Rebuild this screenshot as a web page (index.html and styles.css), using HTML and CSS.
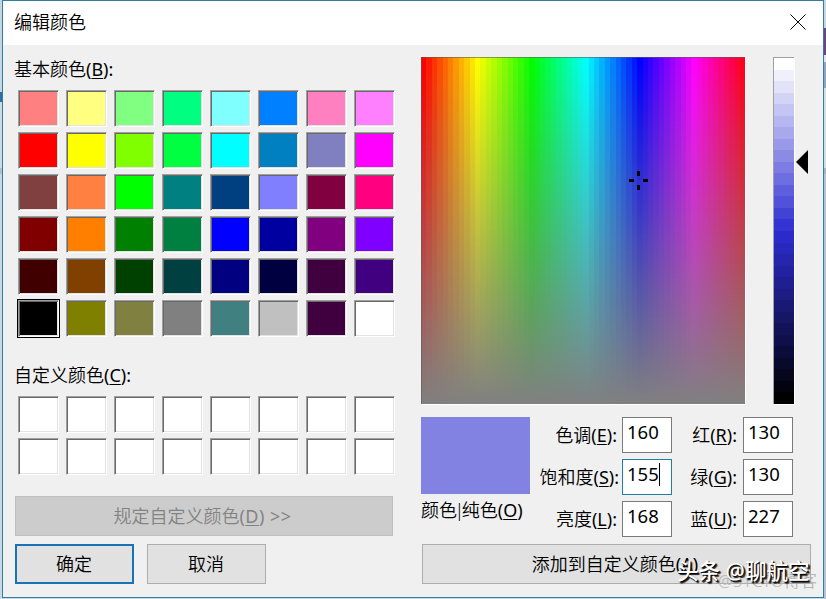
FILE: index.html
```
<!DOCTYPE html>
<html lang="zh-CN">
<head>
    <meta charset="UTF-8">
    <meta name="viewport" content="width=device-width, initial-scale=1.0">
    <title>编辑颜色</title>
    <link rel="stylesheet" href="styles.css">
</head>
<body>

    <div class="dialog">
        <div class="titlebar">
            <span class="title">编辑颜色</span>
            <svg class="close" width="16" height="16" viewBox="0 0 16 16"><path d="M0.5 0.5 L15.5 15.5 M15.5 0.5 L0.5 15.5" stroke="#000" stroke-width="1" fill="none"/></svg>
        </div>

        <div class="content">
            <div class="left">
                <div class="label basic-label">基本颜色<span class="key">(<u>B</u>):</span></div>
                <div class="swatches" id="basic"></div>
                <div class="label custom-label">自定义颜色<span class="key">(<u>C</u>):</span></div>
                <div class="swatches" id="custom"></div>
                <div class="btn disabled">规定自定义颜色<span class="key">(<u>D</u>) &gt;&gt;</span></div>
                <div class="btn-row">
                    <div class="btn primary">确定</div>
                    <div class="btn">取消</div>
                </div>
            </div>

            <div class="right">
                <div class="pickers">
                    <div class="spectrum" id="spectrum">
                        <svg class="cross" width="20" height="20" viewBox="0 0 20 20"><path d="M8 0h3v5H8z M8 14h3v5H8z M0 8h5v3H0z M14 8h5v3h-5z"/></svg>
                    </div>
                    <div class="lum" id="lum"></div>
                    <svg class="arrow" width="12" height="24" viewBox="0 0 12 24"><path d="M0 12 L12 0 V24 Z"/></svg>
                </div>

                <div class="values">
                    <div class="preview-box">
                        <div class="preview"></div>
                        <div class="label">颜色<span class="bar">|</span>纯色<span class="key">(<u>O</u>)</span></div>
                    </div>
                    <div class="fields hsl">
                        <span class="label shift">色调<span class="key">(<u>E</u>):</span></span><div class="field">160</div>
                        <span class="label">饱和度<span class="key">(<u>S</u>):</span></span><div class="field focus">155<i class="caret"></i></div>
                        <span class="label shift">亮度<span class="key">(<u>L</u>):</span></span><div class="field">168</div>
                    </div>
                    <div class="fields rgb">
                        <span class="label">红<span class="key">(<u>R</u>):</span></span><div class="field">130</div>
                        <span class="label">绿<span class="key">(<u>G</u>):</span></span><div class="field">130</div>
                        <span class="label">蓝<span class="key">(<u>U</u>):</span></span><div class="field">227</div>
                    </div>
                </div>

                <div class="btn add">添加到自定义颜色<span class="key">(<u>A</u>)</span></div>
            </div>
        </div>
    </div>

    <div class="mark-small">@51CTO博客</div>
    <div class="mark">头条 @聊航空</div>

    <script>
        const colores = [
            '#ff8080', '#ffff80', '#80ff80', '#00ff80', '#80ffff', '#0080ff', '#ff80c0', '#ff80ff',
            '#ff0000', '#ffff00', '#80ff00', '#00ff40', '#00ffff', '#0080c0', '#8080c0', '#ff00ff',
            '#804040', '#ff8040', '#00ff00', '#008080', '#004080', '#8080ff', '#800040', '#ff0080',
            '#800000', '#ff8000', '#008000', '#008040', '#0000ff', '#0000a0', '#800080', '#8000ff',
            '#400000', '#804000', '#004000', '#004040', '#000080', '#000040', '#400040', '#400080',
            '#000000', '#808000', '#808040', '#808080', '#408080', '#c0c0c0', '#400040', '#ffffff'
        ];

        function add(parent, cls, color) {
            const el = document.createElement('div');
            el.className = cls;
            el.style.backgroundColor = color;
            document.getElementById(parent).appendChild(el);
        }

        colores.forEach((c, i) => add('basic', i === 40 ? 'swatch selected' : 'swatch', c));
        for (let i = 0; i < 16; i++) add('custom', 'swatch', '#ffffff');

        // 60 hue columns, 30 luminosity steps
        for (let i = 0; i < 60; i++) add('spectrum', 'hue', `hsl(${i * 6}, 100%, 50%)`);
        for (let i = 0; i < 30; i++) add('lum', 'step', `hsl(240, 65%, ${100 - i * 100 / 29}%)`);
    </script>

</body>
</html>
```
FILE: styles.css
```
body {
    margin: 0;
    width: 826px;
    height: 599px;
    overflow: hidden;
    position: relative;
    box-sizing: border-box;
    padding: 0 2px 1px;
    /* slivers of the window behind the dialog */
    background:
        linear-gradient(#c5d8e4 28px, #6a4488 28px 55px, #dfe5ee 55px 62px, #93a3c4 62px 88px, #d5dde5 88px 168px, #a9b4c6 168px 174px, #b9c4d3 174px) right / 2px 100% no-repeat,
        linear-gradient(#c3d6e2 92px, #2f6fa6 92px 102px, #cddce6 102px 168px, #aebfcd 168px 174px, #c8d9e6 174px);
    font-family: "Noto Sans", "Noto Sans CJK SC", sans-serif;
    font-size: 18px;
    font-weight: 350;
    line-height: 24px;
    color: #000;
}

.dialog {
    box-sizing: border-box;
    height: 598px;
    border: 1px solid #2f7f9d;
    background-color: #f0f0f0;
}

.titlebar {
    height: 44px;
    box-sizing: border-box;
    padding: 0 17px 2px 11px;
    background-color: #fff;
    display: flex;
    align-items: center;
    justify-content: space-between;
}

.close {
    display: block;
}

.label {
    white-space: nowrap;
}

.key {
    font-weight: 400;
}

u {
    text-decoration-thickness: 1px;
    text-underline-offset: 2px;
}

.content {
    display: flex;
    padding: 12px 12px 0;
}

.left {
    width: 378px;
    margin-right: 28px;
}

.basic-label,
.custom-label {
    text-indent: -1px;
}

.basic-label {
    height: 33px;
}

.swatches {
    display: grid;
    grid-template-columns: repeat(8, 41px);
    grid-auto-rows: 37px;
    gap: 5px 7px;
    margin-left: 3px;
}

.swatch {
    border: 1px solid;
    border-color: #a0a0a0 #fff #fff #a0a0a0;
    box-shadow: inset 1px 1px 0 #696969, inset -1px -1px 0 #e3e3e3;
}

.swatch.selected {
    outline: 1px solid #000;
}

.custom-label {
    margin-top: 26px;
    height: 33px;
}

.btn {
    box-sizing: border-box;
    height: 40px;
    border: 1px solid #adadad;
    background-color: #e1e1e1;
    text-align: center;
    line-height: 38px;
    white-space: nowrap;
}

.disabled {
    margin-top: 21px;
    padding-right: 3px;
    border-color: #bfbfbf;
    background-color: #ccc;
    color: #838383;
}

.disabled .key {
    letter-spacing: 0.5px;
}

.btn-row {
    display: flex;
    gap: 13px;
    margin-top: 8px;
}

.btn-row .btn {
    width: 119px;
    padding-right: 1px;
}

.btn-row .primary {
    border: 2px solid #1874b5;
    line-height: 36px;
}

.right {
    width: 390px;
}

.pickers {
    display: flex;
    height: 347px;
}

.spectrum {
    width: 324px;
    position: relative;
    display: flex;
}

.spectrum::after {
    content: "";
    position: absolute;
    inset: 0;
    background: linear-gradient(rgba(128, 128, 128, 0), #808080);
    box-shadow: inset 1px 1px 0 rgba(90, 90, 90, 0.6), 1px 1px 0 #fff;
}

.hue {
    flex: 1;
}

/* crosshair over the hue field */
.cross {
    position: absolute;
    left: 208px;
    top: 114px;
    z-index: 1;
}

.lum {
    width: 21px;
    margin-left: 28px;
    box-sizing: border-box;
    border-top: 1px solid #a0a0a0;
    border-left: 1px solid #a0a0a0;
    box-shadow: 1px 1px 0 #fff;
    display: flex;
    flex-direction: column;
}

.step {
    flex: 1;
}

.arrow {
    margin: 93px 0 0 2px;
}

.values {
    display: flex;
    margin-top: 13px;
    height: 127px;
}

.preview {
    width: 109px;
    height: 77px;
    margin-bottom: 4px;
    background-color: #8282e3;
}

.preview-box {
    width: 118px;
}

.bar {
    margin: 0 -2.5px;
}

.fields {
    display: grid;
    grid-auto-rows: 36px;
    row-gap: 6px;
    text-align: right;
}

.fields .label {
    line-height: 36px;
}

.hsl {
    grid-template-columns: 80px 50px;
    column-gap: 3px;
}

.rgb {
    grid-template-columns: 65px 50px;
    column-gap: 6px;
}

.shift {
    padding-right: 2px;
}

.field {
    box-sizing: border-box;
    border: 1px solid #7a7a7a;
    background-color: #fff;
    padding-left: 4px;
    font-size: 18.5px;
    font-weight: 400;
    line-height: 28px;
    text-align: left;
}

.field.focus {
    border-color: #1f7fa5;
}

.caret {
    display: inline-block;
    width: 1px;
    height: 23px;
    vertical-align: -5px;
    background-color: #000;
}

.add {
    margin-left: 1px;
    padding-right: 3px;
}

.mark {
    position: absolute;
    left: 677px;
    top: 559px;
    font-size: 21.5px;
    font-weight: 500;
    white-space: nowrap;
    color: #fff;
    text-shadow: 1px 1px 1px #000, 2px 2px 1px #222;
}

.mark-small {
    position: absolute;
    left: 718px;
    top: 569px;
    font-size: 16.7px;
    white-space: nowrap;
    color: #b4b4b4;
}
```
